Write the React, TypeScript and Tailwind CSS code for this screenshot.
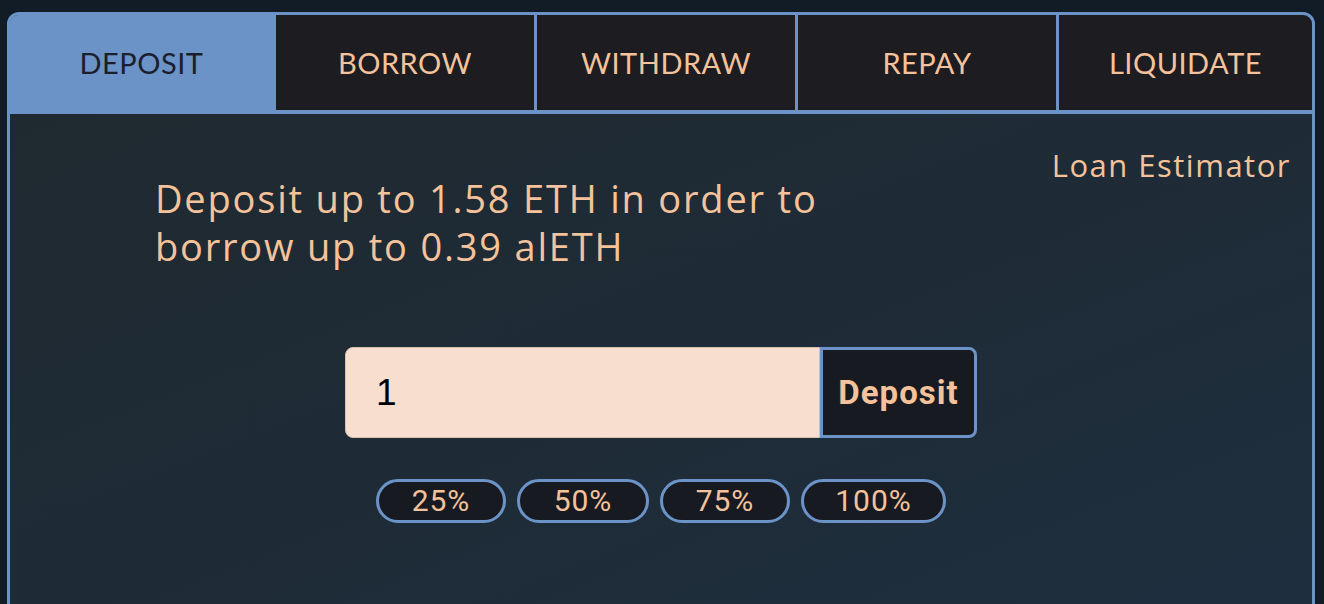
const tabs = ['DEPOSIT', 'BORROW', 'WITHDRAW', 'REPAY', 'LIQUIDATE'];
const tabWidths = ['w-[263px]', 'w-[258px]', 'w-[258px]', 'w-[258px]', 'w-[253px]'];
const shares = ['25%', '50%', '75%', '100%'];
const shareWidths = ['w-[130px]', 'w-[132px]', 'w-[130px]', 'w-[145px]'];

export default function App() {
  return (
    <div className="h-screen overflow-hidden bg-[#111c27] pl-[7px] pt-3">
      <div className="w-[1308px] h-[620px] rounded-t-[12px] border-[3px] border-[#6b93c8] overflow-hidden flex flex-col">
        <div className="flex gap-[3px] bg-[#6b93c8] border-b-4 border-[#6b93c8]">
          {tabs.map((tab, i) => (
            <button
              key={tab}
              className={`${tabWidths[i]} h-[95px] flex items-center justify-center text-[29px] tracking-[0.5px] font-['Lato',sans-serif] ${
                i === 0 ? 'bg-[#6b93c8] text-[#1a1f2b]' : 'bg-[#1c1c21] text-[#f4c29b]'
              }`}
            >
              {tab}
            </button>
          ))}
        </div>

        <div className="flex-1 bg-gradient-to-br from-[#1f2930] to-[#1e2e3e] px-[21px] pt-[31px] relative">
          <div className="text-right text-[31px] tracking-[1.5px] text-[#f4c29b] font-['Open_Sans',sans-serif] leading-[40px]">
            Loan Estimator
          </div>
          <p className="pl-[124px] -mt-[11px] w-[860px] text-[38px] tracking-[1.8px] leading-[48px] text-[#f4c29b] font-['Open_Sans',sans-serif]">
            Deposit up to 1.58 ETH in order to borrow up to 0.39 alETH
          </p>

          <div className="mt-[77px] flex justify-center">
            <div className="flex h-[91px]">
              <input
                defaultValue="1"
                className="w-[475px] h-full rounded-l-[8px] bg-[#f7dece] border border-[#d9bfae] pl-[30px] text-[37px] text-black font-['Liberation_Sans',sans-serif] outline-none"
              />
              <button className="w-[157px] h-full rounded-r-[8px] border-[3px] border-[#6b93c8] bg-[#171a21] text-[33px] tracking-[1px] font-bold text-[#f4c29b] font-['Roboto',sans-serif]">
                Deposit
              </button>
            </div>
          </div>

          <div className="mt-[41px] flex justify-center gap-[11px]">
            {shares.map((s, i) => (
              <button
                key={s}
                className={`${shareWidths[i]} h-[44px] rounded-full border-[3px] border-[#6b93c8] bg-[#171a21] text-[30px] tracking-[1px] text-[#f4c29b] font-['Roboto',sans-serif] leading-none`}
              >
                {s}
              </button>
            ))}
          </div>
        </div>
      </div>
    </div>
  );
}
